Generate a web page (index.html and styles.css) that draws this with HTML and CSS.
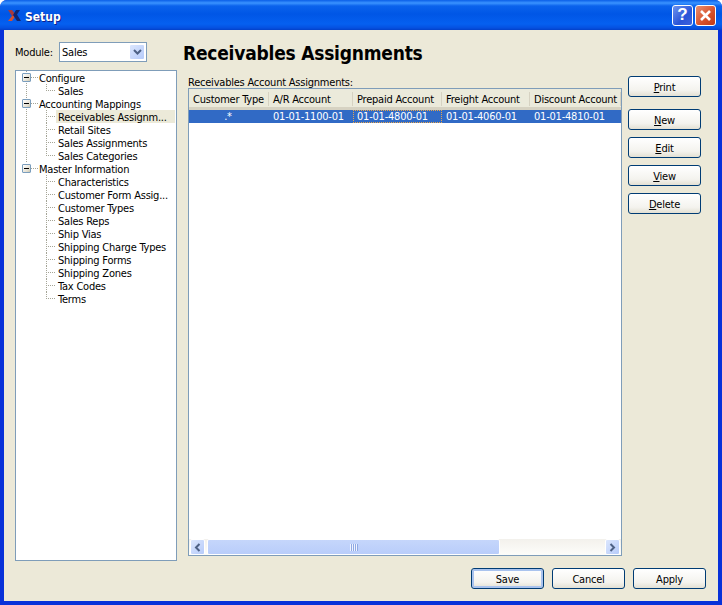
FILE: index.html
```html
<!DOCTYPE html>
<html lang="en">
<head>
    <meta charset="UTF-8">
    <meta name="viewport" content="width=device-width, initial-scale=1.0">
    <title>Setup</title>
    <link rel="stylesheet" href="styles.css">
</head>
<body>

    <div class="window">
        <div class="titlebar">
            <svg class="app-icon" width="13" height="11" viewBox="0 0 13 11">
                <path d="M0 0h4l3 4-1 2H4z" fill="#a83a3c"/>
                <path d="M4 6h3l-1 2-2 3H0z" fill="#d8502c"/>
                <path d="M5 5l3-5h4L9 4.500 13 11H9z" fill="#12256f"/>
            </svg>
            <span class="title-text">Setup</span>
            <button class="cap-btn cap-help">?</button>
            <button class="cap-btn cap-close">
                <svg width="13" height="13" viewBox="0 0 13 13">
                    <path d="M2 2l9 9M11 2l-9 9" stroke="#fff" stroke-width="2.600" fill="none"/>
                </svg>
            </button>
        </div>

        <div class="client">
            <div class="main">
                <div class="side">
                    <div class="module-row">
                        <label>Module:</label>
                        <div class="combo">
                            <span class="combo-text">Sales</span>
                            <span class="combo-arrow">
                                <svg width="9" height="7" viewBox="0 0 9 7">
                                    <path d="M1 1l3.500 3.500L8 1" stroke="#4d6185" stroke-width="2" fill="none"/>
                                </svg>
                            </span>
                        </div>
                    </div>

                    <div class="tree">
                        <div class="branch">
                            <div class="root"><span class="expander"></span><span class="stub"></span>Configure</div>
                            <div class="leaf"><span class="twig last"></span><span class="leaf-text">Sales</span></div>
                        </div>
                        <div class="branch">
                            <div class="root"><span class="expander"></span><span class="stub"></span>Accounting Mappings</div>
                            <div class="leaf selected"><span class="twig"></span><span class="leaf-text">Receivables Assignm...</span></div>
                            <div class="leaf"><span class="twig"></span><span class="leaf-text">Retail Sites</span></div>
                            <div class="leaf"><span class="twig"></span><span class="leaf-text">Sales Assignments</span></div>
                            <div class="leaf"><span class="twig last"></span><span class="leaf-text">Sales Categories</span></div>
                        </div>
                        <div class="branch final">
                            <div class="root"><span class="expander"></span><span class="stub"></span>Master Information</div>
                            <div class="leaf"><span class="twig"></span><span class="leaf-text">Characteristics</span></div>
                            <div class="leaf"><span class="twig"></span><span class="leaf-text">Customer Form Assig...</span></div>
                            <div class="leaf"><span class="twig"></span><span class="leaf-text">Customer Types</span></div>
                            <div class="leaf"><span class="twig"></span><span class="leaf-text">Sales Reps</span></div>
                            <div class="leaf"><span class="twig"></span><span class="leaf-text">Ship Vias</span></div>
                            <div class="leaf"><span class="twig"></span><span class="leaf-text">Shipping Charge Types</span></div>
                            <div class="leaf"><span class="twig"></span><span class="leaf-text">Shipping Forms</span></div>
                            <div class="leaf"><span class="twig"></span><span class="leaf-text">Shipping Zones</span></div>
                            <div class="leaf"><span class="twig"></span><span class="leaf-text">Tax Codes</span></div>
                            <div class="leaf"><span class="twig last"></span><span class="leaf-text">Terms</span></div>
                        </div>
                    </div>
                </div>

                <div class="content">
                    <h1>Receivables Assignments</h1>
                    <div class="list-label">Receivables Account Assignments:</div>
                    <div class="list">
                        <div class="list-body">
                            <table>
                                <thead>
                                    <tr>
                                        <th class="col-type">Customer Type</th>
                                        <th class="col-ar">A/R Account</th>
                                        <th class="col-prepaid">Prepaid Account</th>
                                        <th class="col-freight">Freight Account</th>
                                        <th class="col-discount">Discount Account</th>
                                    </tr>
                                </thead>
                                <tbody>
                                    <tr class="row-selected">
                                        <td class="center">.*</td>
                                        <td>01-01-1100-01</td>
                                        <td class="focused">01-01-4800-01</td>
                                        <td>01-01-4060-01</td>
                                        <td>01-01-4810-01</td>
                                    </tr>
                                </tbody>
                            </table>
                        </div>
                        <div class="hscroll">
                            <span class="scroll-btn">
                                <svg width="7" height="9" viewBox="0 0 7 9"><path d="M5.500 1L2 4.500L5.500 8" stroke="#4d6185" stroke-width="2" fill="none"/></svg>
                            </span>
                            <span class="scroll-thumb"><span class="grip"></span></span>
                            <span class="scroll-track"></span>
                            <span class="scroll-btn">
                                <svg width="7" height="9" viewBox="0 0 7 9"><path d="M1.500 1L5 4.500L1.500 8" stroke="#4d6185" stroke-width="2" fill="none"/></svg>
                            </span>
                        </div>
                    </div>
                </div>

                <div class="actions">
                    <button class="btn print-btn"><u>P</u>rint</button>
                    <button class="btn"><u>N</u>ew</button>
                    <button class="btn"><u>E</u>dit</button>
                    <button class="btn"><u>V</u>iew</button>
                    <button class="btn"><u>D</u>elete</button>
                </div>
            </div>

            <div class="footer">
                <button class="btn default-btn">Save</button>
                <button class="btn">Cancel</button>
                <button class="btn">Apply</button>
            </div>
        </div>
    </div>

</body>
</html>
```
FILE: styles.css
```css
* {
    box-sizing: border-box;
}

body {
    margin: 0;
    font-family: "DejaVu Sans", sans-serif;
    font-stretch: condensed;
    font-size: 11px;
    letter-spacing: -0.22px;
    color: #000;
    background-color: #fff;
}

.window {
    width: 722px;
    height: 605px;
    display: flex;
    flex-direction: column;
    background-color: #0831d9;
    border-radius: 7px 7px 0 0;
    overflow: hidden;
}

/* title bar */
.titlebar {
    height: 30px;
    flex: none;
    display: flex;
    align-items: center;
    padding: 0 6px 0 8px;
    background: linear-gradient(#0a5fe8 0, #3a93ff 3px, #0a62ec 6px, #0056e6 14px, #0560f0 24px, #0550e0 28px, #0340c8 30px);
}

.app-icon {
    flex: none;
    margin-top: 1px;
}

.title-text {
    flex: 1;
    margin-left: 4px;
    padding-top: 3px;
    font-size: 12px;
    font-weight: bold;
    letter-spacing: 0;
    color: #fff;
    text-shadow: 1px 1px 0 #0f1e8c;
}

.cap-btn {
    width: 21px;
    height: 21px;
    padding: 0;
    border: 1px solid #fff;
    border-radius: 3px;
    display: flex;
    align-items: center;
    justify-content: center;
    color: #fff;
    font-family: "Liberation Sans", sans-serif;
    font-size: 17px;
    font-weight: bold;
}

.cap-help {
    background: linear-gradient(135deg, #6f94ee, #2a55d8 60%, #3c62dc);
}

.cap-close {
    margin-left: 2px;
    background: linear-gradient(135deg, #ea8f70, #d7502a 60%, #c23a14);
}

/* window body */
.client {
    flex: 1;
    min-height: 0;
    margin: 0 4px 4px;
    padding: 12px 12px 12px 11px;
    display: flex;
    flex-direction: column;
    gap: 7px;
    background-color: #ece9d8;
}

.main {
    flex: 1;
    min-height: 0;
    display: flex;
}

.side {
    width: 162px;
    flex: none;
    display: flex;
    flex-direction: column;
    gap: 8px;
}

.module-row {
    height: 20px;
    display: flex;
    align-items: center;
}

.module-row label {
    width: 44px;
}

.combo {
    width: 88px;
    height: 20px;
    display: flex;
    align-items: center;
    justify-content: space-between;
    padding: 1px 1px 1px 2px;
    border: 1px solid #7f9db9;
    background-color: #fff;
}

.combo-arrow,
.scroll-btn {
    display: flex;
    align-items: center;
    justify-content: center;
    border: 1px solid #fff;
    border-radius: 2px;
    background: linear-gradient(135deg, #dbe6fd, #b6cbfa);
}

.combo-arrow {
    width: 16px;
    height: 16px;
}

/* tree */
.tree {
    flex: 1;
    padding: 0 1px 0 0;
    border: 1px solid #7f9db9;
    background-color: #fff;
}

.branch {
    background-image: linear-gradient(#a5a597 50%, transparent 50%);
    background-size: 1px 2px;
    background-repeat: repeat-y;
    background-position: 10px 0;
}

.branch.final {
    background-image: none;
}

.root,
.leaf {
    height: 13px;
    line-height: 15px;
    display: flex;
    white-space: nowrap;
}

.root {
    padding-left: 6px;
}

.expander {
    position: relative;
    width: 9px;
    height: 9px;
    flex: none;
    margin-top: 2px;
    border: 1px solid #7b9ebd;
    border-radius: 1px;
    background: linear-gradient(135deg, #fff, #e4e0d2 70%, #c8c4b0);
}

.expander::after {
    content: "";
    position: absolute;
    left: 1px;
    top: 3px;
    width: 5px;
    height: 1px;
    background-color: #000;
}

.stub {
    width: 8px;
    height: 1px;
    flex: none;
    margin-top: 6px;
    background-image: linear-gradient(to right, #a5a597 50%, transparent 50%);
    background-size: 2px 1px;
}

.leaf {
    padding-left: 30px;
}

.twig {
    width: 10px;
    height: 13px;
    flex: none;
    background-image:
        linear-gradient(#a5a597 50%, transparent 50%),
        linear-gradient(to right, #a5a597 50%, transparent 50%);
    background-size: 1px 2px, 2px 1px;
    background-repeat: repeat-y, repeat-x;
    background-position: 0 0, 0 6px;
}

.twig.last {
    height: 7px;
}

.leaf-text {
    flex: 1;
    height: 13px;
    padding-left: 2px;
}

.leaf.selected .leaf-text {
    background-color: #ecead9;
}

/* middle column */
.content {
    flex: 1;
    min-width: 0;
    margin-left: 6px;
    display: flex;
    flex-direction: column;
    padding-bottom: 5px;
}

h1 {
    margin: 0;
    height: 26px;
    line-height: 22px;
    font-size: 19px;
    font-weight: bold;
    white-space: nowrap;
}

.list-label {
    margin: 7px 0 0 5px;
    height: 13px;
    line-height: 15px;
}

.list {
    flex: 1;
    min-height: 0;
    margin-left: 5px;
    display: flex;
    flex-direction: column;
    border: 1px solid #7f9db9;
    background-color: #fff;
}

.list-body {
    flex: 1;
    min-height: 0;
}

table {
    width: 432px;
    table-layout: fixed;
    border-collapse: separate;
    border-spacing: 0;
}

th {
    height: 21px;
    padding: 3px 0 0 4px;
    font-weight: normal;
    text-align: left;
    white-space: nowrap;
    overflow: hidden;
    background-color: #ebeadb;
    border-bottom: 3px solid #d6d2c2;
    background-image: linear-gradient(#d6d2c2, #d6d2c2);
    background-size: 1px 14px;
    background-position: right 3px;
    background-repeat: no-repeat;
}

.col-type {
    width: 80px;
}

.col-ar {
    width: 84px;
}

.col-prepaid {
    width: 89px;
}

.col-freight {
    width: 88px;
}

td {
    height: 13px;
    padding: 0 0 0 4px;
    line-height: 13px;
    white-space: nowrap;
}

td.center {
    padding: 0 2px 0 0;
    text-align: center;
}

.row-selected td {
    background-color: #316ac5;
    color: #fff;
}

.row-selected td.focused {
    outline: 1px dotted #e8a64c;
    outline-offset: -1px;
}

/* scroll bar */
.hscroll {
    height: 16px;
    flex: none;
    display: flex;
    align-items: stretch;
    padding: 0 1px;
    background: linear-gradient(#f3f1ec, #fdfdfa);
}

.scroll-btn {
    width: 15px;
    flex: none;
}

.scroll-thumb {
    width: 293px;
    margin-left: 2px;
    flex: none;
    display: flex;
    align-items: center;
    justify-content: center;
    border: 1px solid #fff;
    border-radius: 2px;
    background: linear-gradient(#c5d6fb, #b9cdfa);
}

.grip {
    width: 8px;
    height: 7px;
    background-image: linear-gradient(to right, #eef3fe 50%, #8fa9e4 50%);
    background-size: 2px 7px;
}

.scroll-track {
    flex: 1;
}

/* buttons */
.actions {
    width: 84px;
    flex: none;
    padding-left: 6px;
    display: flex;
    flex-direction: column;
    gap: 7px;
}

.btn {
    width: 73px;
    height: 21px;
    padding: 2px 0 0;
    border: 1px solid #003c74;
    border-radius: 3px;
    background: linear-gradient(#fff, #f4f3ee 70%, #e3e0d3);
    font-family: inherit;
    font-stretch: inherit;
    font-size: 11px;
    letter-spacing: inherit;
    color: #000;
    flex: none;
}

.print-btn {
    margin-top: 34px;
    margin-bottom: 5px;
}

.footer {
    height: 21px;
    flex: none;
    display: flex;
    justify-content: flex-end;
    gap: 8px;
}

.default-btn {
    box-shadow: inset 0 0 0 2px #a9c3ee;
}
```
